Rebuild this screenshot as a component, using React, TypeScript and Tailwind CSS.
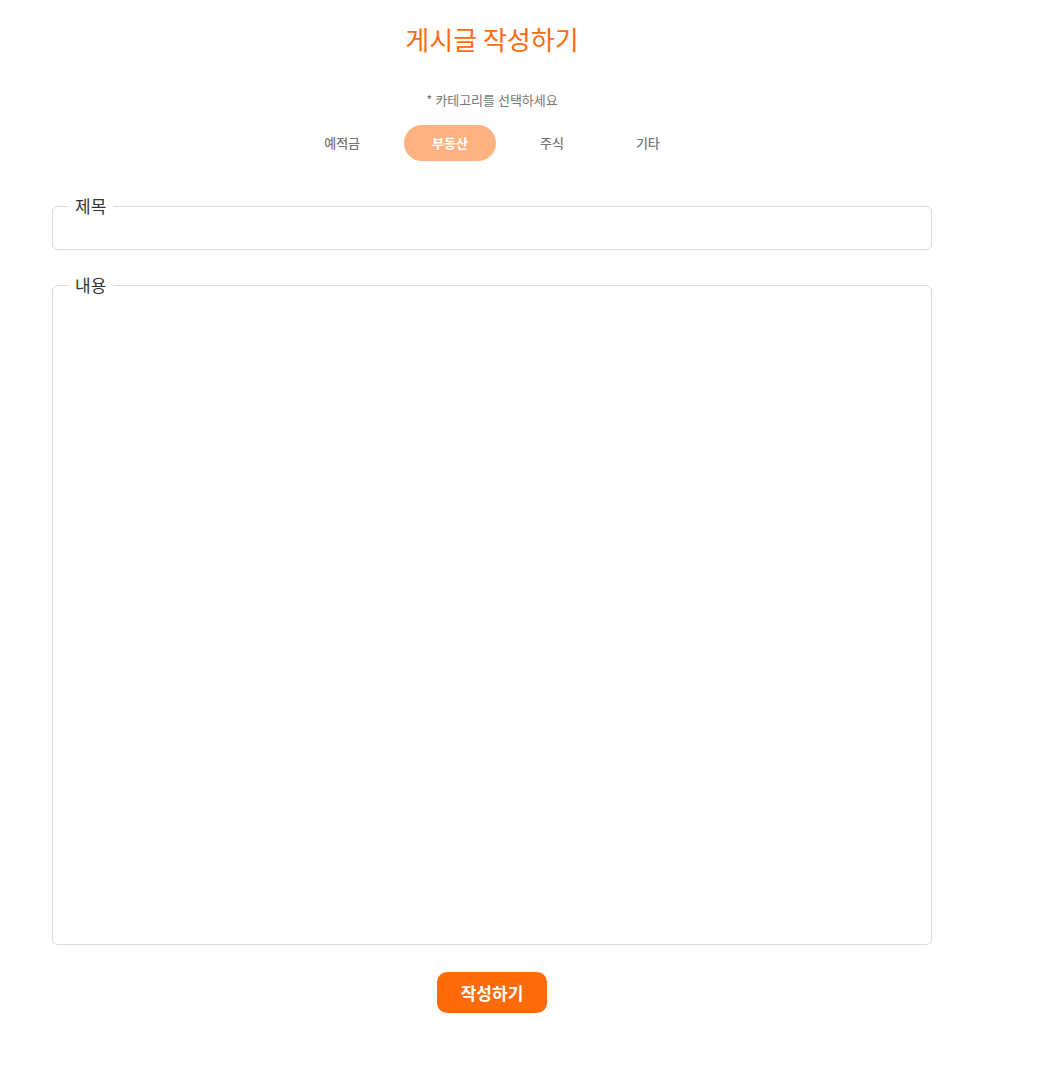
import { useState } from 'react'

const CATEGORIES = ['예적금', '부동산', '주식', '기타']

export default function App() {
  const [category, setCategory] = useState('부동산')

  return (
    <div className="w-[984px] px-[52px] bg-white font-['Noto_Sans_CJK_KR','Noto_Sans',sans-serif]">
      <h1 className="pt-[19px] text-center text-[26px] leading-[40px] text-[#ff6b0f]">게시글 작성하기</h1>

      <p className="mt-[31px] text-center text-[13px] leading-[20px] text-[#777]">* 카테고리를 선택하세요</p>

      <div className="mt-[15px] flex justify-center gap-4">
        {CATEGORIES.map((c) => (
          <button
            key={c}
            onClick={() => setCategory(c)}
            className={`h-9 rounded-full px-7 text-[13px] ${
              category === c ? 'bg-[#ffb27f] font-bold text-white' : 'font-medium text-[#777]'
            }`}
          >
            {c}
          </button>
        ))}
      </div>

      <form className="mt-[33px]">
        <fieldset className="rounded-md border border-[#dcdcdc]">
          <legend className="ml-[15px] px-[7px] text-[17px] leading-[24px] text-[#333]">제목</legend>
          <input className="block h-[31px] w-full px-4 text-[15px] outline-none" />
        </fieldset>

        <fieldset className="mt-[23px] rounded-md border border-[#dcdcdc]">
          <legend className="ml-[15px] px-[7px] text-[17px] leading-[24px] text-[#333]">내용</legend>
          <textarea className="block h-[647px] w-full resize-none px-4 text-[15px] outline-none" />
        </fieldset>

        <div className="mt-[27px] flex justify-center">
          <button
            type="button"
            className="h-[41px] w-[110px] rounded-[10px] bg-[#ff6a0a] text-[17px] font-bold text-white"
          >
            작성하기
          </button>
        </div>
      </form>
    </div>
  )
}
